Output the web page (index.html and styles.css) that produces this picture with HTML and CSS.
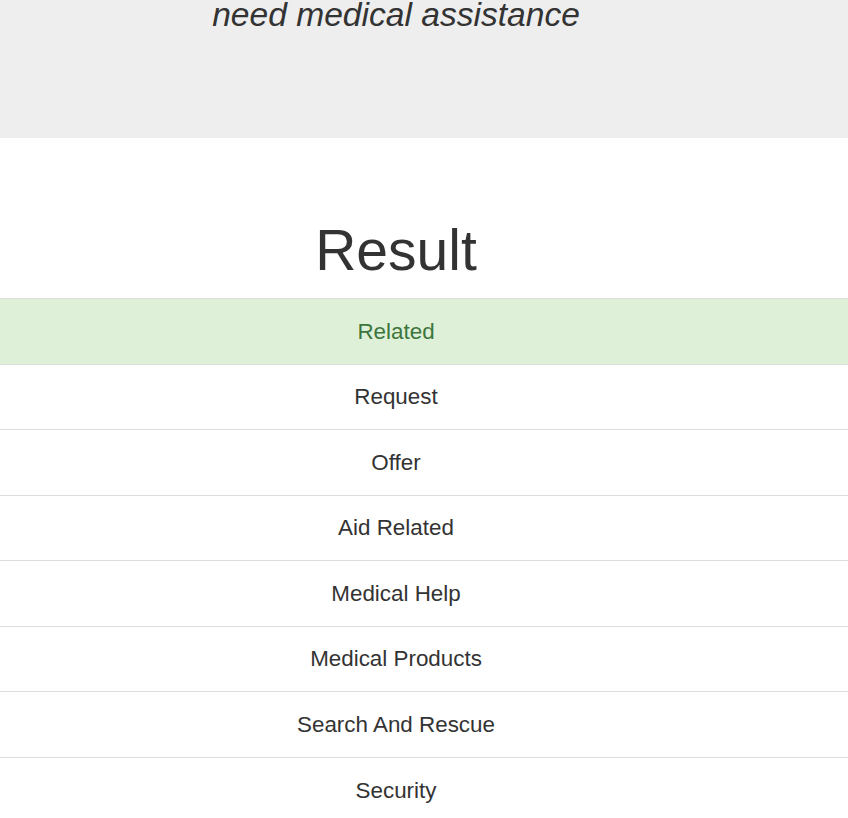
FILE: index.html
```html
<!DOCTYPE html>
<html lang="en">
<head>
<meta charset="utf-8">
<title>Result</title>
<link rel="stylesheet" href="styles.css">
</head>
<body>
<div class="jumbotron">
  <p class="query">need medical assistance</p>
</div>
<section class="result">
  <h1 class="result-title">Result</h1>
  <ul class="list-group">
    <li class="list-group-item success">Related</li>
    <li class="list-group-item">Request</li>
    <li class="list-group-item">Offer</li>
    <li class="list-group-item">Aid Related</li>
    <li class="list-group-item">Medical Help</li>
    <li class="list-group-item">Medical Products</li>
    <li class="list-group-item">Search And Rescue</li>
    <li class="list-group-item">Security</li>
  </ul>
</section>
</body>
</html>
```
FILE: styles.css
```css
html, body {
  margin: 0;
  padding: 0;
}
body {
  font-family: "Liberation Sans", Arial, Helvetica, sans-serif;
  color: #333;
  background: #fff;
}
.jumbotron {
  background: #eee;
  height: 138px;
  box-sizing: border-box;
  padding: 0 56px 0 0;
}
.query {
  margin: 0;
  font-style: italic;
  font-size: 33.6px;
  line-height: 29px;
  text-align: center;
}
.result {
  padding-top: 81px;
}
.result-title {
  margin: 0 0 17px 0;
  padding-right: 56px;
  font-size: 57px;
  font-weight: 400;
  line-height: 62px;
  text-align: center;
}
.list-group {
  list-style: none;
  margin: 0;
  padding: 0;
}
.list-group-item {
  border-top: 1px solid #ddd;
  padding: 16.57px 71px 16.57px 15px;
  font-size: 22.4px;
  line-height: 31.43px;
  text-align: center;
  background: #fff;
}
.list-group-item.success {
  background: #dff0d8;
  color: #3c763d;
}
```
